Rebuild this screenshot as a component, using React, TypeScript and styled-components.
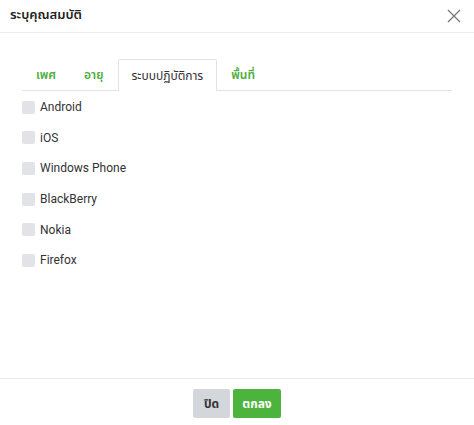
import React, { useState } from "react";
import styled, { createGlobalStyle } from "styled-components";

const GlobalStyle = createGlobalStyle`
  html, body {
    margin: 0;
    padding: 0;
    background: #fff;
  }
  body {
    font-family: Roboto, "Noto Sans Thai", "Noto Sans Thai UI", "Noto Sans", "Liberation Sans", sans-serif;
    color: #333;
  }
`;

const Modal = styled.div`
  display: flex;
  flex-direction: column;
  height: 100vh;
  background: #fff;
`;

const Header = styled.div`
  display: flex;
  align-items: center;
  justify-content: space-between;
  height: 32px;
  padding: 0 10px;
  border-bottom: 1px solid #ececec;
`;

const Title = styled.h2`
  margin: 0 0 2px;
  font-size: 13px;
  font-weight: 600;
  color: #222;
`;

const CloseButton = styled.button`
  display: flex;
  align-items: center;
  justify-content: center;
  padding: 0;
  margin-right: 3px;
  border: none;
  background: none;
  cursor: pointer;
`;

const Body = styled.div`
  flex: 1;
  padding: 26px 22px 0 22px;
`;

const Tabs = styled.div`
  display: flex;
  height: 31px;
  border-bottom: 1px solid #e3e3e3;
`;

const Tab = styled.div<{ $active?: boolean }>`
  display: flex;
  align-items: center;
  padding: 0 13px;
  font-size: 12px;
  cursor: pointer;
  color: ${(p) => (p.$active ? "#333" : "#4cae3c")};
  font-weight: ${(p) => (p.$active ? 400 : 600)};
  background: ${(p) => (p.$active ? "#fff" : "transparent")};
  border: 1px solid ${(p) => (p.$active ? "#e3e3e3" : "transparent")};
  border-bottom: none;
  margin-bottom: ${(p) => (p.$active ? "-1px" : "0")};
  border-radius: 2px 2px 0 0;
`;

const List = styled.div`
  display: flex;
  flex-direction: column;
  gap: 10.7px;
  padding-top: 6px;
`;

const Option = styled.label`
  display: flex;
  align-items: center;
  gap: 5px;
  height: 20px;
  font-size: 12px;
  color: #333;
  cursor: pointer;
`;

const Box = styled.span<{ $checked?: boolean }>`
  width: 13px;
  height: 13px;
  border-radius: 2px;
  background: ${(p) => (p.$checked ? "#4cb43c" : "#e1e3e6")};
`;

const Footer = styled.div`
  display: flex;
  justify-content: center;
  gap: 3px;
  padding: 10px 0 7px;
  border-top: 1px solid #ececec;
`;

const Button = styled.button<{ $primary?: boolean }>`
  height: 29px;
  width: ${(p) => (p.$primary ? "48px" : "37px")};
  padding: 0;
  border: none;
  border-radius: 2px;
  font-family: inherit;
  font-size: 12px;
  font-weight: 700;
  color: ${(p) => (p.$primary ? "#fff" : "#333")};
  background: ${(p) => (p.$primary ? "#4cb43c" : "#d3d7db")};
  cursor: pointer;
`;

const tabs = ["เพศ", "อายุ", "ระบบปฏิบัติการ", "พื้นที่"];
const systems = ["Android", "iOS", "Windows Phone", "BlackBerry", "Nokia", "Firefox"];

export default function App() {
  const [active, setActive] = useState(2);
  const [checked, setChecked] = useState<string[]>([]);

  const toggle = (name: string) =>
    setChecked((c) => (c.includes(name) ? c.filter((x) => x !== name) : [...c, name]));

  return (
    <>
      <GlobalStyle />
      <Modal>
        <Header>
          <Title>ระบุคุณสมบัติ</Title>
          <CloseButton aria-label="close">
            <svg width="14" height="14" viewBox="0 0 14 14">
              <path d="M1 1L13 13M13 1L1 13" stroke="#777" strokeWidth="1.3" fill="none" />
            </svg>
          </CloseButton>
        </Header>
        <Body>
          <Tabs>
            {tabs.map((t, i) => (
              <Tab key={t} $active={i === active} onClick={() => setActive(i)}>
                {t}
              </Tab>
            ))}
          </Tabs>
          <List>
            {systems.map((s) => (
              <Option key={s} onClick={() => toggle(s)}>
                <Box $checked={checked.includes(s)} />
                {s}
              </Option>
            ))}
          </List>
        </Body>
        <Footer>
          <Button>ปิด</Button>
          <Button $primary>ตกลง</Button>
        </Footer>
      </Modal>
    </>
  );
}
